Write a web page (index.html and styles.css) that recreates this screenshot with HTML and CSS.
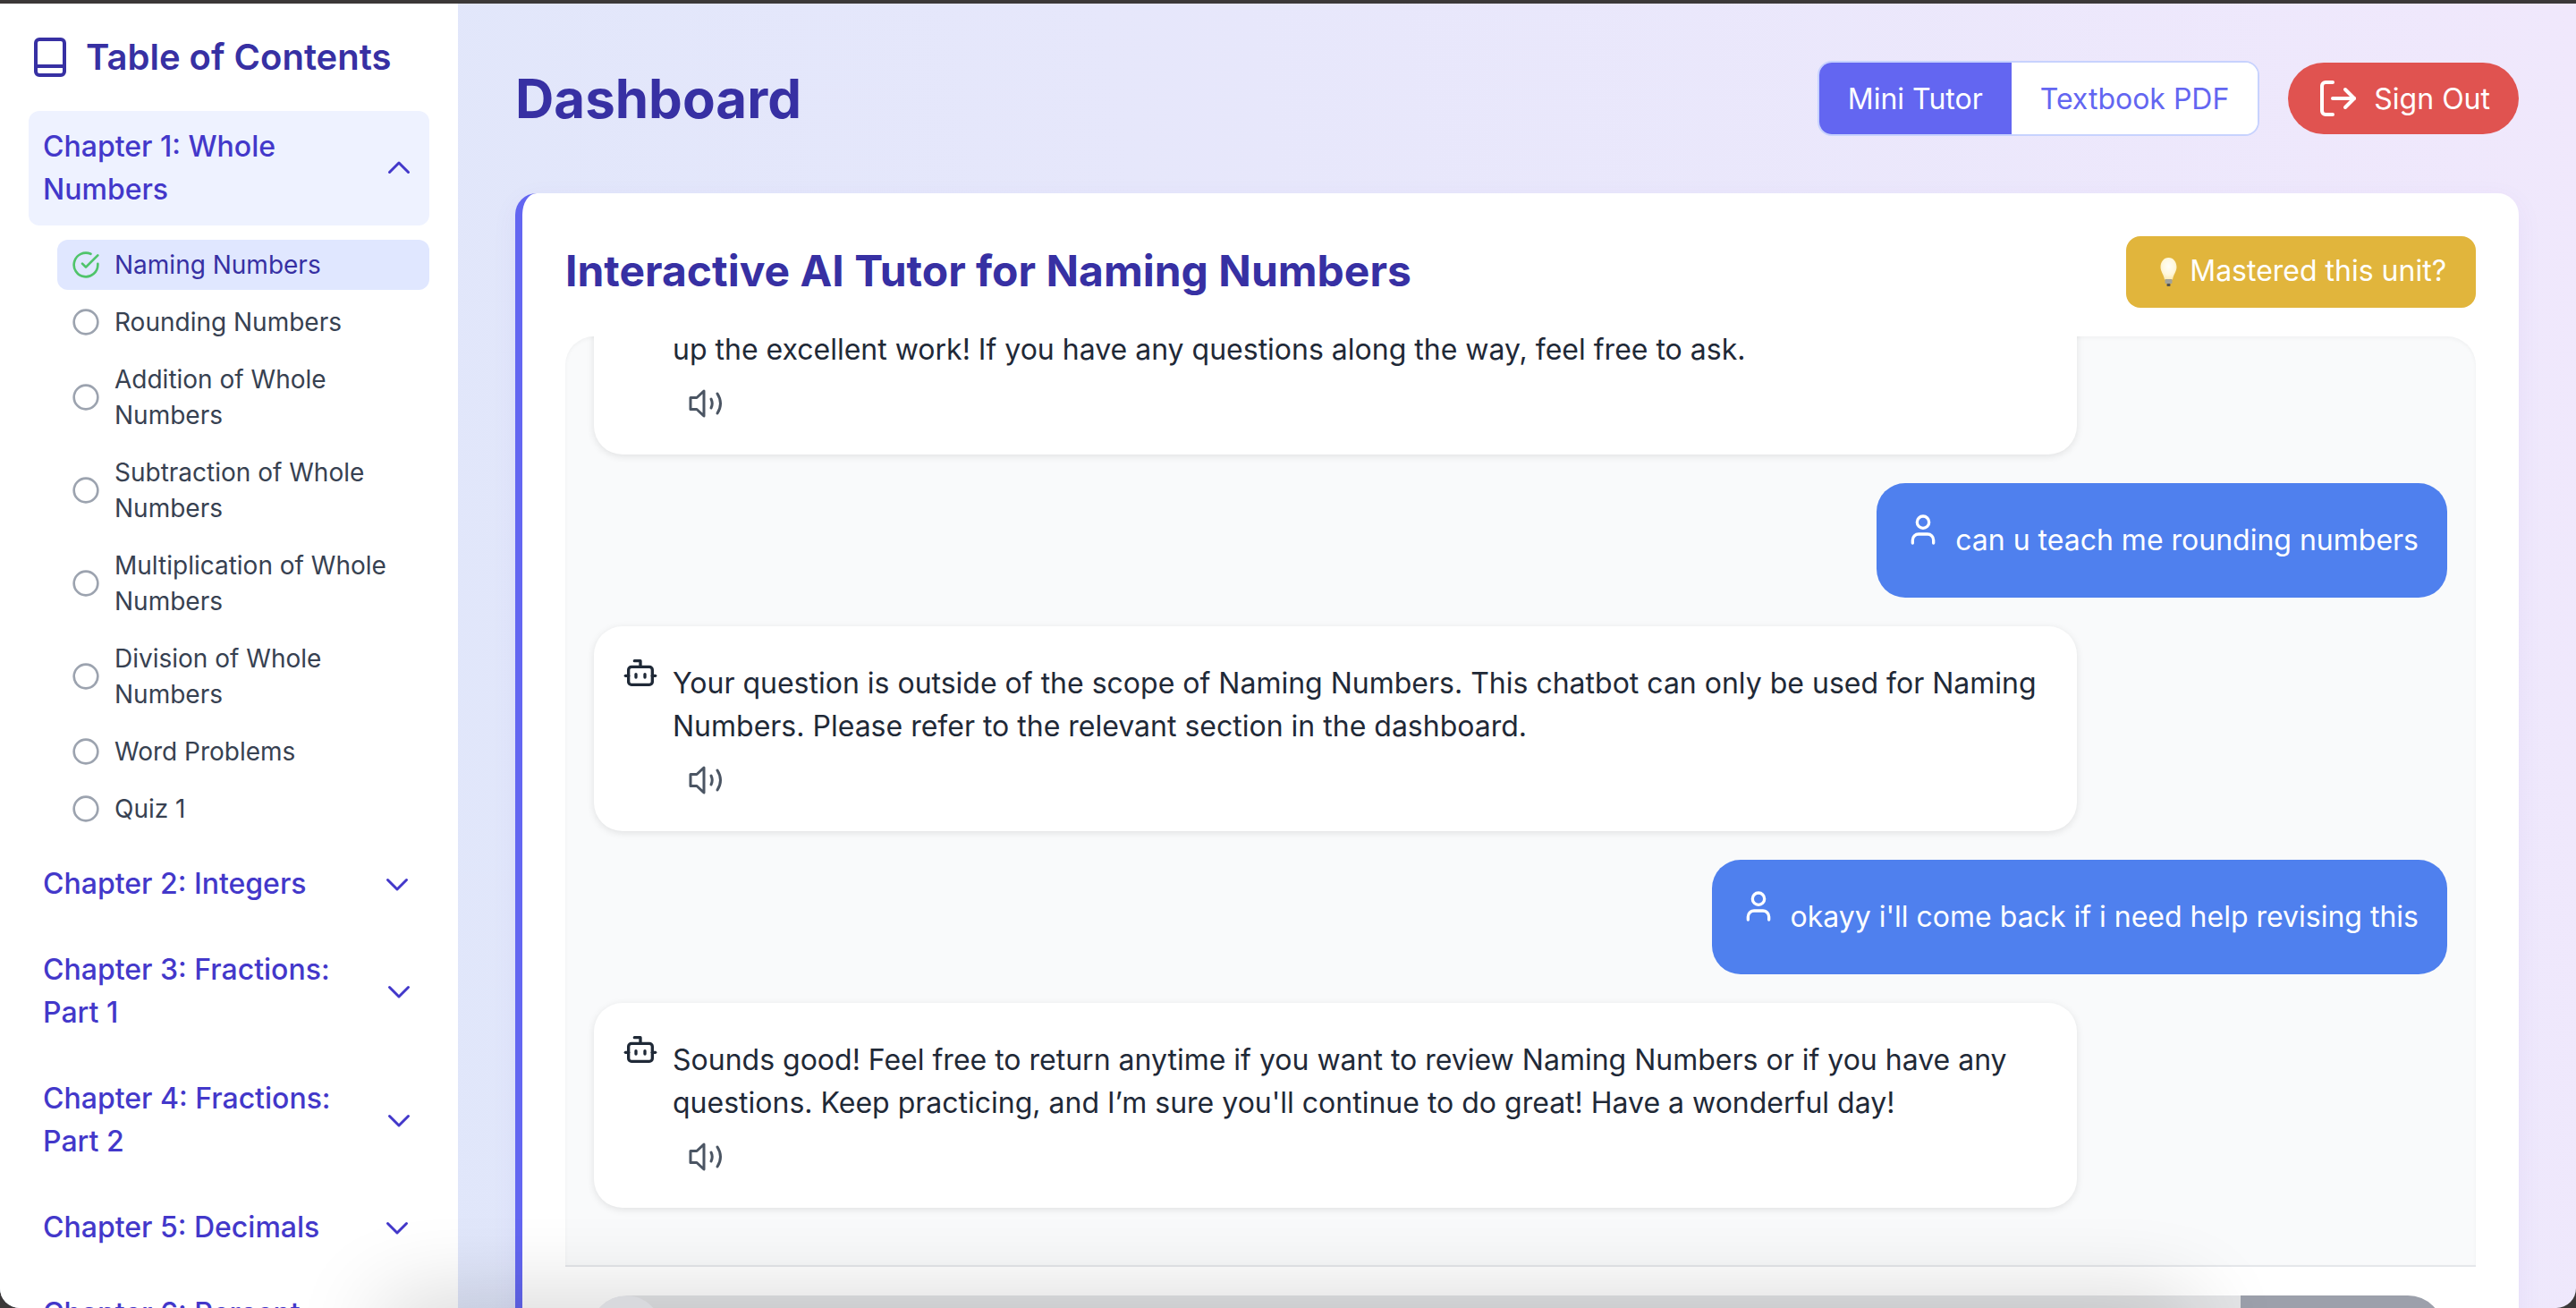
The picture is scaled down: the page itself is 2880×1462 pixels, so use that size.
FILE: index.html
```html
<!DOCTYPE html>
<html lang="en">
<head>
    <meta charset="UTF-8">
    <title>Dashboard</title>
    <link rel="stylesheet" href="styles.css">
</head>
<body>
<div class="window">

    <aside class="sidebar">
        <div class="sidebar-title">
            <svg class="book-icon" viewBox="0 0 36 44" fill="none" stroke="currentColor" stroke-width="4"><rect x="2" y="2" width="32" height="40" rx="4"/><path d="M2 32h32"/></svg>
            <span>Table of Contents</span>
        </div>

        <div class="chapter chapter-open">
            <span>Chapter 1: Whole Numbers</span>
            <svg class="chevron" viewBox="0 0 24 24"><path d="M5 15l7-7 7 7"/></svg>
        </div>
        <ul class="unit-list">
            <li class="unit unit-active">
                <svg class="unit-icon icon-done" viewBox="0 0 24 24"><path d="M22 11.08V12a10 10 0 1 1-5.93-9.14"/><path d="M22 4 12 14.01l-3-3"/></svg>
                <span>Naming Numbers</span>
            </li>
            <li class="unit"><svg class="unit-icon" viewBox="0 0 24 24"><circle cx="12" cy="12" r="10"/></svg><span>Rounding Numbers</span></li>
            <li class="unit"><svg class="unit-icon" viewBox="0 0 24 24"><circle cx="12" cy="12" r="10"/></svg><span>Addition of Whole Numbers</span></li>
            <li class="unit"><svg class="unit-icon" viewBox="0 0 24 24"><circle cx="12" cy="12" r="10"/></svg><span>Subtraction of Whole Numbers</span></li>
            <li class="unit"><svg class="unit-icon" viewBox="0 0 24 24"><circle cx="12" cy="12" r="10"/></svg><span>Multiplication of Whole Numbers</span></li>
            <li class="unit"><svg class="unit-icon" viewBox="0 0 24 24"><circle cx="12" cy="12" r="10"/></svg><span>Division of Whole Numbers</span></li>
            <li class="unit"><svg class="unit-icon" viewBox="0 0 24 24"><circle cx="12" cy="12" r="10"/></svg><span>Word Problems</span></li>
            <li class="unit"><svg class="unit-icon" viewBox="0 0 24 24"><circle cx="12" cy="12" r="10"/></svg><span>Quiz 1</span></li>
        </ul>

        <div class="chapter"><span>Chapter 2: Integers</span><svg class="chevron chevron-short" viewBox="0 0 24 24"><path d="M19 9l-7 7-7-7"/></svg></div>
        <div class="chapter"><span>Chapter 3: Fractions: Part 1</span><svg class="chevron" viewBox="0 0 24 24"><path d="M19 9l-7 7-7-7"/></svg></div>
        <div class="chapter"><span>Chapter 4: Fractions: Part 2</span><svg class="chevron" viewBox="0 0 24 24"><path d="M19 9l-7 7-7-7"/></svg></div>
        <div class="chapter"><span>Chapter 5: Decimals</span><svg class="chevron chevron-short" viewBox="0 0 24 24"><path d="M19 9l-7 7-7-7"/></svg></div>
        <div class="chapter"><span>Chapter 6: Percent</span><svg class="chevron chevron-short" viewBox="0 0 24 24"><path d="M19 9l-7 7-7-7"/></svg></div>
    </aside>

    <main class="main">
        <header class="main-header">
            <h1>Dashboard</h1>
            <div class="header-actions">
                <div class="tabs">
                    <button class="tab tab-active">Mini Tutor</button>
                    <button class="tab">Textbook PDF</button>
                </div>
                <button class="sign-out">
                    <svg class="line-icon" width="48" height="48" viewBox="0 0 24 24"><path d="M9 21H5a2 2 0 0 1-2-2V5a2 2 0 0 1 2-2h4"/><path d="m16 17 5-5-5-5"/><path d="M21 12H9"/></svg>
                    Sign Out
                </button>
            </div>
        </header>

        <section class="card">
            <div class="card-header">
                <h2>Interactive AI Tutor for Naming Numbers</h2>
                <button class="mastered">
                    <svg width="25" height="32" viewBox="0 0 25 32">
                        <defs><radialGradient id="bulbGlow" cx="50%" cy="40%" r="60%"><stop offset="0" stop-color="#fffef8"/><stop offset="0.65" stop-color="#fff8dc"/><stop offset="1" stop-color="#fbeab5"/></radialGradient></defs>
                        <path d="M12.500 0C7 0 3.500 5 3.500 10.500c0 5 3.500 8 4.500 14h9c1-6 4.500-9 4.500-14C21.500 5 18 0 12.500 0z" fill="url(#bulbGlow)"/>
                        <rect x="8.500" y="24" width="8" height="5" rx="1" fill="#a3a39a"/>
                        <rect x="10.500" y="29" width="4" height="3" rx="1" fill="#55534e"/>
                    </svg>
                    <span class="mastered-label">Mastered this unit?</span>
                </button>
            </div>

            <div class="chat-panel">
                <div class="chat-scroll">
                    <div class="message message-bot">
                        <span class="bot-spacer"></span>
                        <div>
                            <p>up the excellent work! If you have any questions along the way, feel free to ask.</p>
                            <svg class="speaker" viewBox="0 0 40 32"><path d="M17 2 9 9.500H2v13h7L17 30z"/><path d="M25 11q2.500 5 0 10"/><path d="M32 5q7 11 0 22"/></svg>
                        </div>
                    </div>

                    <div class="message message-user">
                        <svg class="line-icon chat-icon" viewBox="0 0 24 24"><path d="M19 21v-2a4 4 0 0 0-4-4H9a4 4 0 0 0-4 4v2"/><circle cx="12" cy="7" r="4"/></svg>
                        <p>can u teach me rounding numbers</p>
                    </div>

                    <div class="message message-bot">
                        <svg class="line-icon chat-icon" viewBox="0 0 24 24"><path d="M12 8V4H8"/><rect x="4" y="8" width="16" height="12" rx="2"/><path d="M2 14h2"/><path d="M20 14h2"/><path d="M15 13v2"/><path d="M9 13v2"/></svg>
                        <div>
                            <p>Your question is outside of the scope of Naming Numbers. This chatbot can only be used for Naming Numbers. Please refer to the relevant section in the dashboard.</p>
                            <svg class="speaker" viewBox="0 0 40 32"><path d="M17 2 9 9.500H2v13h7L17 30z"/><path d="M25 11q2.500 5 0 10"/><path d="M32 5q7 11 0 22"/></svg>
                        </div>
                    </div>

                    <div class="message message-user">
                        <svg class="line-icon chat-icon" viewBox="0 0 24 24"><path d="M19 21v-2a4 4 0 0 0-4-4H9a4 4 0 0 0-4 4v2"/><circle cx="12" cy="7" r="4"/></svg>
                        <p>okayy i'll come back if i need help revising this</p>
                    </div>

                    <div class="message message-bot">
                        <svg class="line-icon chat-icon" viewBox="0 0 24 24"><path d="M12 8V4H8"/><rect x="4" y="8" width="16" height="12" rx="2"/><path d="M2 14h2"/><path d="M20 14h2"/><path d="M15 13v2"/><path d="M9 13v2"/></svg>
                        <div>
                            <p>Sounds good! Feel free to return anytime if you want to review Naming Numbers or if you have any questions. Keep practicing, and I’m sure you'll continue to do great! Have a wonderful day!</p>
                            <svg class="speaker" viewBox="0 0 40 32"><path d="M17 2 9 9.500H2v13h7L17 30z"/><path d="M25 11q2.500 5 0 10"/><path d="M32 5q7 11 0 22"/></svg>
                        </div>
                    </div>
                </div>
            </div>

            <form class="chat-form">
                <input type="text" class="chat-input">
                <button type="button" class="send">Send</button>
            </form>
        </section>
    </main>
</div>
</body>
</html>
```

FILE: styles.css
```css
* {
    box-sizing: border-box;
}
body {
    margin: 0;
    padding-top: 4px;
    background-color: #3b3838;
    font-family: Inter, "Liberation Sans", sans-serif;
    overflow: hidden;
}
button, input {
    font-family: inherit;
    border: none;
}
h1, h2, p, ul {
    margin: 0;
    padding: 0;
}

.window {
    position: relative;
    display: flex;
    width: 2880px;
    height: 1458px;
    overflow: hidden;
    border-radius: 0 0 22px 22px;
    background: linear-gradient(80deg, #dde6fa, #f0e8fc);
}
/* soft shadow that bleeds up from the bottom edge */
.window::after {
    content: "";
    position: absolute;
    left: 430px;
    right: 430px;
    bottom: -60px;
    height: 60px;
    box-shadow: 0 0 100px rgba(0, 0, 0, 0.24);
    pointer-events: none;
}

/* sidebar */
.sidebar {
    flex: none;
    width: 512px;
    height: 100%;
    padding: 36px 32px 0;
    overflow: hidden;
    background-color: #fff;
}
.sidebar-title {
    display: flex;
    align-items: center;
    gap: 22px;
    margin: 0 0 36px 6px;
    font-size: 40px;
    line-height: 56px;
    font-weight: 600;
    color: #3730a3;
    height: 48px;
}
.book-icon {
    width: 36px;
    height: 44px;
}
.chapter {
    display: flex;
    align-items: center;
    justify-content: space-between;
    gap: 16px;
    padding: 16px;
    margin-bottom: 16px;
    font-size: 32px;
    line-height: 48px;
    font-weight: 500;
    color: #4338ca;
    border-radius: 12px;
}
.chapter-open {
    background-color: #eef2ff;
}
.chevron {
    flex: none;
    width: 36px;
    height: 36px;
    fill: none;
    stroke: currentColor;
    stroke-width: 2;
    stroke-linecap: round;
    stroke-linejoin: round;
}
.chevron-short {
    margin-right: 2px;
}
.unit-list {
    list-style: none;
    display: flex;
    flex-direction: column;
    gap: 8px;
    margin-left: 32px;
    margin-bottom: 16px;
}
.unit {
    display: flex;
    align-items: center;
    gap: 16px;
    padding: 8px 16px;
    font-size: 28px;
    line-height: 40px;
    color: #374151;
    border-radius: 12px;
}
.unit-active {
    background-color: #e0e7ff;
    color: #3730a3;
}
.unit-icon {
    flex: none;
    width: 32px;
    height: 32px;
    fill: none;
    stroke: #9ca3af;
    stroke-width: 2;
    stroke-linecap: round;
    stroke-linejoin: round;
}
.icon-done {
    stroke: #4fc46a;
}

/* main area */
.main {
    flex: 1;
    min-width: 0;
    height: 100%;
    padding: 64px 64px 0;
    overflow: hidden;
}
.main-header {
    display: flex;
    align-items: center;
    justify-content: space-between;
    height: 84px;
    margin-bottom: 64px;
}
h1 {
    font-size: 60px;
    font-weight: 700;
    color: #3730a3;
}
.header-actions {
    display: flex;
    align-items: center;
    gap: 32px;
}
.tabs {
    display: flex;
    overflow: hidden;
    border: 2px solid #c7d2fe;
    border-radius: 16px;
    background-color: #fff;
}
.tab {
    height: 80px;
    padding: 0 32px;
    font-size: 32px;
    color: #6366f1;
    background-color: #fff;
}
.tab-active {
    color: #fff;
    background-color: #6366f1;
}
.sign-out {
    display: flex;
    align-items: center;
    gap: 16px;
    height: 80px;
    padding: 0 32px;
    font-size: 32px;
    color: #fff;
    background-color: #e05350;
    border-radius: 40px;
}
.line-icon {
    fill: none;
    stroke: currentColor;
    stroke-width: 2;
    stroke-linecap: round;
    stroke-linejoin: round;
}

/* tutor card */
.card {
    height: 1300px;
    padding: 48px 48px 0;
    background-color: #fff;
    border-left: 8px solid #6366f1;
    border-radius: 24px;
    box-shadow: 0 8px 30px rgba(99, 70, 200, 0.06);
}
.card-header {
    display: flex;
    align-items: center;
    justify-content: space-between;
    margin-bottom: 32px;
}
h2 {
    padding-bottom: 3px;
    font-size: 48px;
    font-weight: 700;
    color: #3730a3;
}
.mastered {
    display: flex;
    align-items: center;
    gap: 11px;
    height: 80px;
    padding: 0 33px 0 35px;
    font-size: 32px;
    color: #fff;
    background-color: #e1b53c;
    border-radius: 16px;
}
.mastered-label {
    padding-bottom: 3px;
}

/* chat */
.chat-panel {
    height: 1040px;
    padding: 0 32px;
    overflow: hidden;
    background-color: #f9fafb;
    border-bottom: 2px solid #e5e7eb;
    border-radius: 32px 32px 0 0;
    box-shadow: inset 0 2px 4px rgba(0, 0, 0, 0.04);
}
.chat-scroll {
    display: flex;
    flex-direction: column;
    gap: 32px;
    margin-top: -49px;
}
.message {
    display: flex;
    align-items: flex-start;
    gap: 16px;
    padding: 40px 32px;
    font-size: 32px;
    line-height: 48px;
    border-radius: 32px;
}
.message-bot {
    width: 1658px;
    color: #1f2937;
    background-color: #fff;
    box-shadow: 0 2px 8px rgba(0, 0, 0, 0.1);
}
.message-user {
    align-self: flex-end;
    color: #fff;
    background-color: #4f80ee;
}
.chat-icon {
    flex: none;
    width: 40px;
    height: 40px;
    margin-top: -8px;
}
.bot-spacer {
    flex: none;
    width: 40px;
}
.speaker {
    display: block;
    width: 40px;
    height: 32px;
    margin: 20px 0 1px 18px;
    fill: none;
    stroke: #4b5563;
    stroke-width: 3;
    stroke-linecap: round;
    stroke-linejoin: round;
}

/* input row, cut off by the bottom of the window */
.chat-form {
    display: flex;
    height: 80px;
    margin: 32px 36px 0 28px;
    overflow: hidden;
    border-radius: 40px;
}
.chat-form::before {
    content: "";
    flex: none;
    width: 80px;
    height: 80px;
    margin-right: -40px;
    border-radius: 50%;
    background-color: #d8d9dd;
    z-index: 1;
}
.chat-input {
    flex: 1;
    min-width: 0;
    background-color: #e3e4e6;
}
.send {
    flex: none;
    width: 227px;
    font-size: 32px;
    color: #fff;
    background-color: #9ca0ab;
}
```
